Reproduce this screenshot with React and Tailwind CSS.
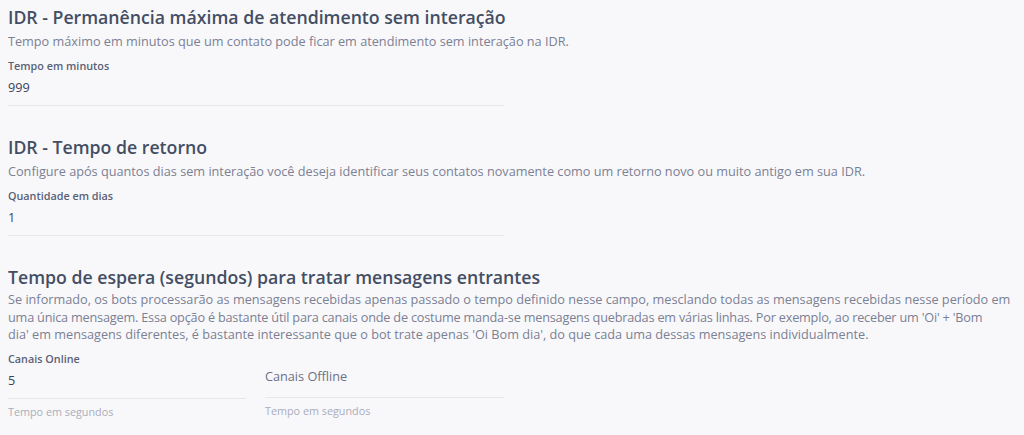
export default function App() {
  const font = { fontFamily: '"Open Sans", "Noto Sans", sans-serif' }
  return (
    <div className="w-[1024px] h-[435px] bg-[#f8f8fb] overflow-hidden px-2 pt-[5px] text-[#495057]" style={font}>
      <section className="h-[130px]">
        <h2 className="text-[17.7px] leading-[24px] font-semibold text-[#444e63]">IDR - Permanência máxima de atendimento sem interação</h2>
        <p className="text-[12.7px] leading-[20px] mt-[2px] text-[#7b8093]">Tempo máximo em minutos que um contato pode ficar em atendimento sem interação na IDR.</p>
        <div className="w-[496px] mt-[8px] border-b border-[#e6e6ec] pb-[8px]">
          <div className="text-[10.8px] leading-[14px] font-semibold text-[#5a6175]">Tempo em minutos</div>
          <div className="text-[12.7px] leading-[20px] mt-[4px] text-[#3c4254]">999</div>
        </div>
      </section>
      <section className="h-[130px]">
        <h2 className="text-[17.7px] leading-[24px] font-semibold text-[#444e63]">IDR - Tempo de retorno</h2>
        <p className="text-[12.7px] leading-[20px] mt-[2px] text-[#7b8093]">Configure após quantos dias sem interação você deseja identificar seus contatos novamente como um retorno novo ou muito antigo em sua IDR.</p>
        <div className="w-[496px] mt-[8px] border-b border-[#e6e6ec] pb-[8px]">
          <div className="text-[10.8px] leading-[14px] font-semibold text-[#5a6175]">Quantidade em dias</div>
          <div className="text-[12.7px] leading-[20px] mt-[4px] text-[#3c4254]">1</div>
        </div>
      </section>
      <section>
        <h2 className="text-[17.7px] leading-[24px] font-semibold text-[#444e63]">Tempo de espera (segundos) para tratar mensagens entrantes</h2>
        <p className="text-[12.7px] leading-[17.5px] mt-[2px] text-[#7b8093] whitespace-nowrap">
          Se informado, os bots processarão as mensagens recebidas apenas passado o tempo definido nesse campo, mesclando todas as mensagens recebidas nesse período em
          <br />
          <span className="tracking-[-0.2px]">uma única mensagem. Essa opção é bastante útil para canais onde de costume manda-se mensagens quebradas em várias linhas. Por exemplo, ao receber um 'Oi' + 'Bom</span>
          <br />
          dia' em mensagens diferentes, é bastante interessante que o bot trate apenas 'Oi Bom dia', do que cada uma dessas mensagens individualmente.
        </p>
        <div className="flex gap-[19px] mt-[8px]">
          <div className="w-[238px]">
            <div className="border-b border-[#e6e6ec] pb-[8px]">
              <div className="text-[10.8px] leading-[14px] font-semibold text-[#5a6175]">Canais Online</div>
              <div className="text-[12.7px] leading-[20px] mt-[4px] text-[#3c4254]">5</div>
            </div>
            <div className="text-[10.8px] leading-[14px] mt-[6px] text-[#a9adb9]">Tempo em segundos</div>
          </div>
          <div className="w-[239px]">
            <div className="border-b border-[#e6e6ec] pt-[12px] pb-[8px] h-[46px] flex items-center">
              <div className="text-[12.7px] leading-[20px] text-[#6b7184]">Canais Offline</div>
            </div>
            <div className="text-[10.8px] leading-[14px] mt-[6px] text-[#a9adb9]">Tempo em segundos</div>
          </div>
        </div>
      </section>
    </div>
  )
}
